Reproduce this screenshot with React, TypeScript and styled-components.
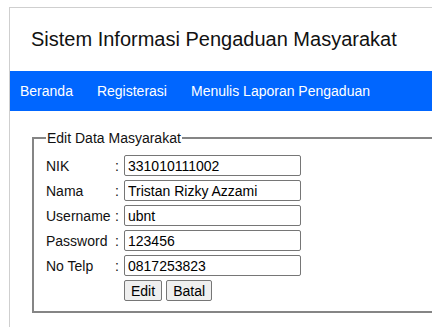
import React from 'react';
import styled, { createGlobalStyle } from 'styled-components';

const Global = createGlobalStyle`
  body {
    margin: 0;
    padding: 7px 0 0 9px;
    background: #fff;
    font-family: "Liberation Sans", Arial, sans-serif;
    overflow: hidden;
  }
`;

const Wrapper = styled.div`
  width: 960px;
  border: 1px solid #cfcfcf;
  border-right: none;
  min-height: 340px;
`;

const Header = styled.header`
  height: 63px;
  display: flex;
  align-items: center;
  padding-left: 21px;
  h1 {
    margin: 0;
    font-size: 20px;
    font-weight: normal;
    color: #111;
  }
`;

const Nav = styled.nav`
  height: 40px;
  background: #0066ff;
  display: flex;
  align-items: center;
  padding-left: 10px;
  gap: 24px;
  a {
    color: #fff;
    font-size: 14px;
    text-decoration: none;
  }
`;

const Content = styled.div`
  padding: 19px 0 0 22px;
`;

const Fieldset = styled.fieldset`
  margin: 0;
  padding: 9px 12px 10px 12px;
  border: 2px solid #858585;
  legend {
    font-size: 14px;
    color: #111;
    padding: 0 1px;
  }
`;

const Grid = styled.div`
  display: grid;
  grid-template-columns: 69px 9px 177px;
  row-gap: 4px;
  align-items: center;
  font-size: 14px;
  color: #111;
`;

const Colon = styled.span`
  text-align: left;
`;

const Input = styled.input`
  box-sizing: border-box;
  width: 177px;
  height: 21px;
  border: 1px solid #767676;
  border-radius: 2px;
  padding: 1px 3px;
  font-family: "Liberation Sans", Arial, sans-serif;
  font-size: 14px;
  color: #000;
`;

const Buttons = styled.div`
  grid-column: 3;
  display: flex;
  gap: 4px;
`;

const Button = styled.button`
  box-sizing: border-box;
  height: 21px;
  padding: 0 6px;
  border: 1px solid #767676;
  border-radius: 2px;
  background: #efefef;
  font-family: "Liberation Sans", Arial, sans-serif;
  font-size: 14px;
  color: #000;
`;

const rows = [
  ['NIK', '331010111002'],
  ['Nama', 'Tristan Rizky Azzami'],
  ['Username', 'ubnt'],
  ['Password', '123456'],
  ['No Telp', '0817253823'],
];

export default function App() {
  return (
    <>
      <Global />
      <Wrapper>
        <Header>
          <h1>Sistem Informasi Pengaduan Masyarakat</h1>
        </Header>
        <Nav>
          <a href="#">Beranda</a>
          <a href="#">Registerasi</a>
          <a href="#">Menulis Laporan Pengaduan</a>
        </Nav>
        <Content>
          <Fieldset>
            <legend>Edit Data Masyarakat</legend>
            <Grid>
              {rows.map(([label, value]) => (
                <React.Fragment key={label}>
                  <span>{label}</span>
                  <Colon>:</Colon>
                  <Input defaultValue={value} />
                </React.Fragment>
              ))}
              <Buttons>
                <Button>Edit</Button>
                <Button>Batal</Button>
              </Buttons>
            </Grid>
          </Fieldset>
        </Content>
      </Wrapper>
    </>
  );
}
